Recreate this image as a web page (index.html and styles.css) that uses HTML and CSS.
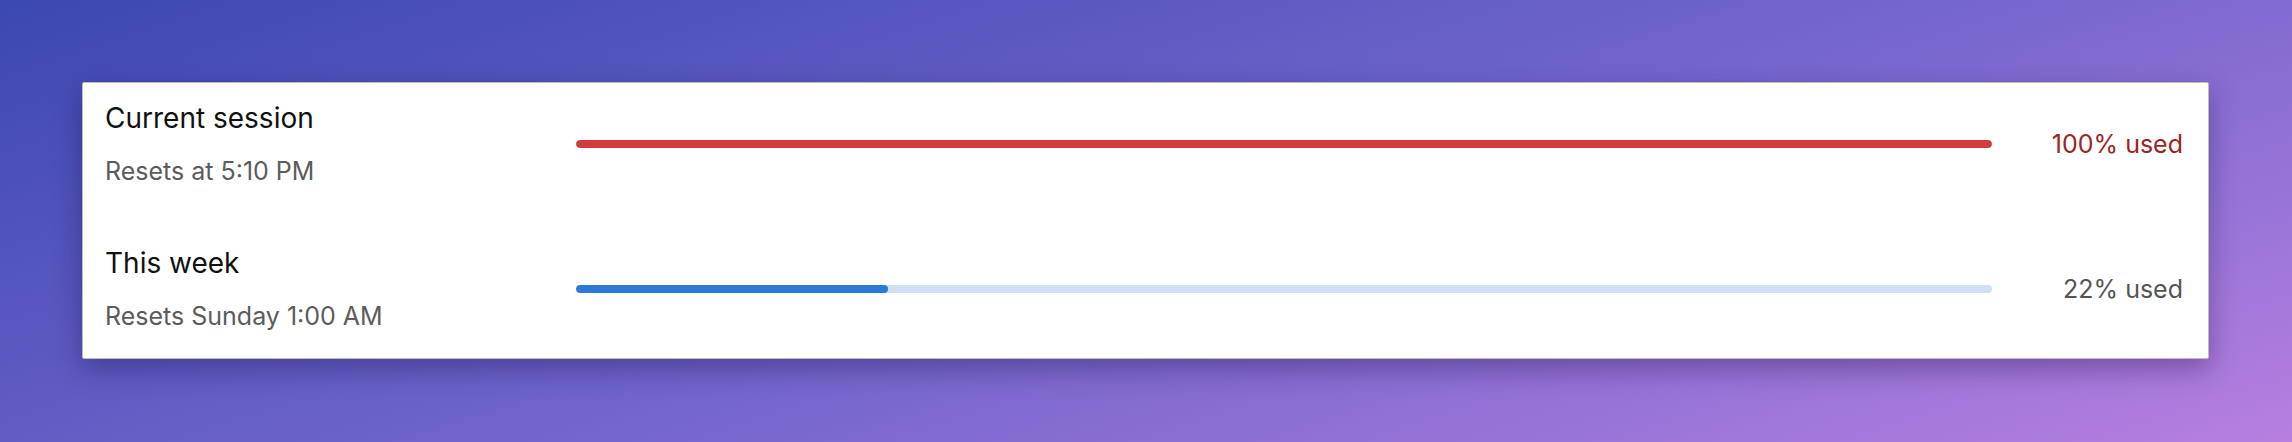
FILE: index.html
```html
<!DOCTYPE html>
<html lang="en">
<head>
<meta charset="utf-8">
<title>Usage</title>
<link rel="stylesheet" href="styles.css">
</head>
<body>
<div class="stage">
  <section class="card">
    <div class="row">
      <div class="label">
        <div class="title">Current session</div>
        <div class="sub">Resets at 5:10 PM</div>
      </div>
      <div class="track track-full"><div class="fill fill-red" style="width:100%"></div></div>
      <div class="pct pct-red">100% used</div>
    </div>
    <div class="row">
      <div class="label">
        <div class="title">This week</div>
        <div class="sub">Resets Sunday 1:00 AM</div>
      </div>
      <div class="track"><div class="fill fill-blue" style="width:22%"></div></div>
      <div class="pct">22% used</div>
    </div>
  </section>
</div>
</body>
</html>
```

FILE: styles.css
```css
html, body {
  margin: 0;
  padding: 0;
}
body {
  width: 2292px;
  height: 442px;
  overflow: hidden;
  font-family: Inter, "Noto Sans", "Liberation Sans", sans-serif;
  background: linear-gradient(162deg, #3c48b1 0%, #6f64cb 50%, #b67fe0 100%);
}
.stage {
  padding: 82px 83px 83px 82px;
}
.card {
  background: #ffffff;
  border: 1px solid #bcbcbc;
  border-radius: 2px;
  box-shadow: 0 10px 28px rgba(20, 10, 60, 0.35);
  padding: 17px 25px 25px 22px;
  display: flex;
  flex-direction: column;
  gap: 57px;
}
.row {
  display: grid;
  grid-template-columns: 439px 1fr 159px;
  column-gap: 32px;
  align-items: center;
}
.label {
  display: flex;
  flex-direction: column;
  gap: 18px;
}
.title {
  font-size: 28px;
  line-height: 36px;
  color: #111111;
}
.sub {
  font-size: 25px;
  line-height: 34px;
  color: #5c5c5c;
}
.track {
  height: 8px;
  border-radius: 4px;
  background: #cfe0f5;
  overflow: hidden;
}
.fill {
  height: 100%;
  border-radius: 4px;
}
.fill-red {
  background: #d23b3b;
}
.fill-blue {
  background: #2a7ad6;
}
.pct {
  text-align: right;
  font-size: 25px;
  line-height: 34px;
  color: #555555;
}
.pct-red {
  color: #9e2424;
}
```
